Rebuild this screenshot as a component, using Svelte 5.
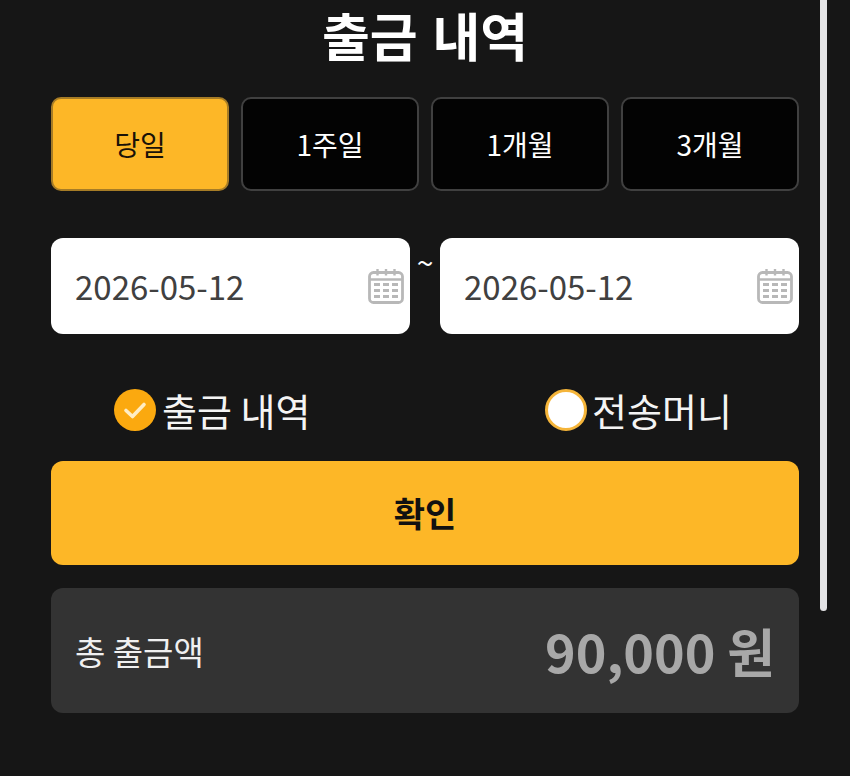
<script>
  const tabs = ['당일', '1주일', '1개월', '3개월'];
  const dates = ['2026-05-12', '2026-05-12'];
</script>

{#snippet calendar()}
  <svg class="cal" viewBox="0 0 36 36" fill="none" stroke="#b8b8b8" aria-hidden="true">
    <rect x="1.5" y="4.5" width="33" height="30" rx="4" stroke-width="2.8" />
    <path d="M1.5 11.5H34.5" stroke-width="2.4" />
    <path d="M9.5 1V7.5M18 1V7.5M26.5 1V7.5" stroke-width="2.4" />
    <path d="M6 16.5H12M15 16.5H21M24 16.5H30M6 22.5H12M15 22.5H21M24 22.5H30M6 28.5H12M15 28.5H21M24 28.5H30" stroke-width="3" />
  </svg>
{/snippet}

<div class="page">
  <span class="scrollbar"></span>
  <h1>출금 내역</h1>

  <div class="tabs">
    {#each tabs as tab, i}
      <button class="tab" class:active={i === 0}>{tab}</button>
    {/each}
  </div>

  <div class="dates">
    <div class="date"><span>{dates[0]}</span>{@render calendar()}</div>
    <span class="tilde">~</span>
    <div class="date"><span>{dates[1]}</span>{@render calendar()}</div>
  </div>

  <div class="radios">
    <label class="radio first">
      <span class="mark checked">
        <svg viewBox="0 0 42 42" fill="none" aria-hidden="true"><path d="M12 21.5L18.5 27.5L30 15.5" stroke="#ffedc4" stroke-width="3.6" stroke-linecap="round" stroke-linejoin="round" /></svg>
      </span>
      출금 내역
    </label>
    <label class="radio second">
      <span class="mark unchecked"></span>
      전송머니
    </label>
  </div>

  <button class="confirm">확인</button>

  <div class="total">
    <span class="label">총 출금액</span>
    <span class="amount">90,000 원</span>
  </div>
</div>

<style>
  :global(body) {
    margin: 0;
    background: #161616;
  }
  .page {
    position: relative;
    box-sizing: border-box;
    height: 776px;
    padding: 0 51px;
    overflow: hidden;
    background: #161616;
    font-family: "Noto Sans CJK KR", "Noto Sans", sans-serif;
    color: #fff;
  }
  .scrollbar {
    position: absolute;
    left: 820px;
    top: 0;
    width: 7px;
    height: 611px;
    border-radius: 0 0 4px 4px;
    background: #e4e4e6;
  }
  h1 {
    margin: 0;
    height: 97px;
    box-sizing: border-box;
    font-size: 52px;
    line-height: 70px;
    font-weight: 700;
    word-spacing: 3px;
    text-align: center;
  }
  .tabs {
    display: grid;
    grid-template-columns: repeat(4, 1fr);
    gap: 12px;
  }
  .tab {
    height: 94px;
    box-sizing: border-box;
    border: 2px solid #404040;
    border-radius: 10px;
    background: #030303;
    color: #fff;
    font: 400 28px/1 "Noto Sans CJK KR", sans-serif;
    padding: 0;
  }
  .tab.active {
    background: #fdb727;
    border-color: #a67c26;
    color: #1a1208;
  }
  .dates {
    display: flex;
    align-items: flex-start;
    margin-top: 47px;
  }
  .date {
    flex: 1;
    height: 96px;
    box-sizing: border-box;
    display: flex;
    align-items: center;
    justify-content: space-between;
    padding: 0 6px 0 24px;
    border-radius: 12px;
    background: #fff;
    color: #404040;
    font-size: 33px;
  }
  .tilde {
    width: 30px;
    text-align: center;
    font-size: 30px;
    line-height: 46px;
  }
  .cal {
    width: 36px;
    height: 36px;
  }
  .radios {
    position: relative;
    height: 127px;
  }
  .radio {
    position: absolute;
    top: 54px;
    display: flex;
    align-items: center;
    gap: 6px;
    height: 44px;
    font-size: 38px;
    line-height: 44px;
    white-space: nowrap;
    color: #f4f4f4;
  }
  .first { left: 63px; }
  .second { left: 494px; gap: 5px; }
  .mark {
    width: 42px;
    height: 42px;
    box-sizing: border-box;
    border-radius: 50%;
    flex: none;
    margin-top: -1px;
  }
  .checked {
    background: #fba90f;
  }
  .checked svg {
    display: block;
    width: 42px;
    height: 42px;
  }
  .unchecked {
    background: #fff;
    border: 3px solid #f5b53a;
  }
  .confirm {
    display: block;
    width: 100%;
    height: 104px;
    border: 0;
    border-radius: 12px;
    background: #fdb727;
    color: #111;
    font: 700 34px/1 "Noto Sans CJK KR", sans-serif;
    padding: 0;
  }
  .total {
    display: flex;
    align-items: center;
    justify-content: space-between;
    height: 125px;
    box-sizing: border-box;
    margin-top: 23px;
    padding: 0 24px 0 24px;
    border-radius: 12px;
    background: #333333;
  }
  .label {
    font-size: 33px;
    color: #f0f0f0;
  }
  .amount {
    font-size: 52px;
    font-weight: 700;
    color: #a8a8a8;
  }
</style>
